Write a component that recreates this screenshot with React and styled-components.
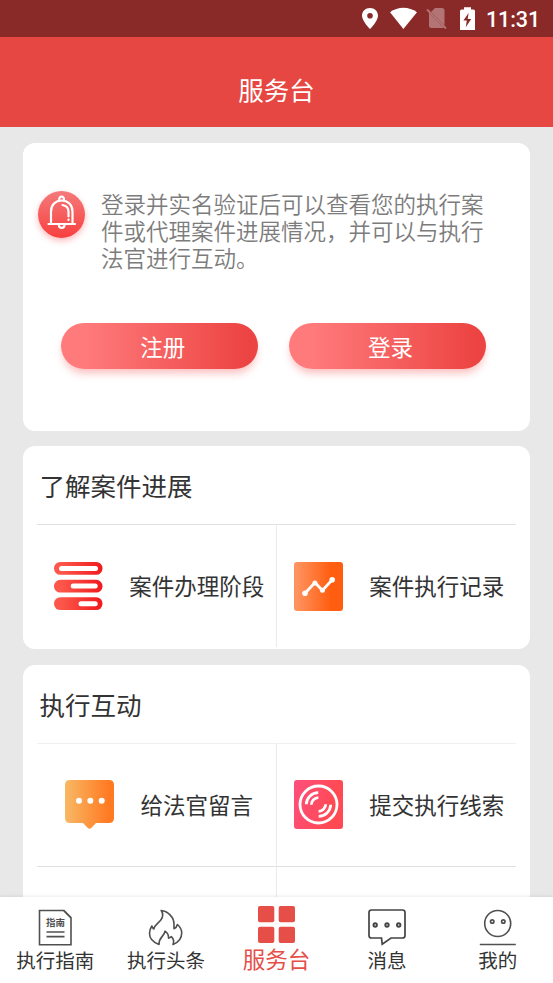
import React, { useState } from 'react';
import styled, { createGlobalStyle } from 'styled-components';

const GlobalStyle = createGlobalStyle`
  * {
    box-sizing: border-box;
  }
  body {
    margin: 0;
    font-family: "Noto Sans CJK SC", sans-serif;
    color: #333;
  }
  svg {
    display: block;
    flex: none;
  }
`;

const Screen = styled.div`
  display: flex;
  flex-direction: column;
  height: 983px;
  overflow: hidden;
  background-color: #e8e8e8;
`;

const StatusBar = styled.div`
  display: flex;
  flex: none;
  align-items: center;
  justify-content: flex-end;
  height: 37px;
  padding-right: 12px;
  background-color: #892a29;
`;

const Clock = styled.span`
  width: 55px;
  margin-left: 10px;
  padding-top: 1px;
  color: #fff;
  font-family: Roboto, sans-serif;
  font-size: 21.5px;
  font-weight: 500;
  line-height: 37px;
  letter-spacing: -0.1px;
`;

const Header = styled.header`
  flex: none;
  height: 90px;
  padding-top: 17px;
  background-color: #e64743;
  color: #fff;
  font-size: 25.5px;
  line-height: 70px;
  text-align: center;
`;

const Content = styled.main`
  display: flex;
  flex: 1;
  flex-direction: column;
  gap: 15.5px;
  min-height: 0;
  padding: 16px 23px 0;
  overflow: hidden;
`;

const Card = styled.section`
  flex: none;
  height: ${(props) => props.$height}px;
  padding: 0 14px;
  border-radius: 12px;
  background-color: #fff;
  overflow: hidden;
`;

const Notice = styled.div`
  display: flex;
  padding: 47px 0 0 1px;
`;

const NoticeText = styled.p`
  width: 384px;
  margin: 0 0 0 16px;
  color: #7c7c7c;
  font-size: 22.5px;
  font-weight: 350;
  line-height: 27px;
  white-space: nowrap;
`;

const BellBadge = styled.div`
  display: flex;
  flex: none;
  align-items: center;
  justify-content: center;
  width: 47px;
  height: 47px;
  margin-top: 1px;
  border-radius: 50%;
  background: linear-gradient(#f57a7b, #f8403f);
  box-shadow: 0 3px 6px rgba(248, 64, 64, 0.35);
`;

const Actions = styled.div`
  display: flex;
  gap: 30.6px;
  padding: 52px 0 0 24.3px;
`;

const Button = styled.button`
  width: 197px;
  height: 46px;
  padding: 0 0 0 6px;
  border: none;
  border-radius: 23px;
  background: linear-gradient(90deg, #ff7a7b 12%, #ec4442 95%);
  box-shadow: 0 6px 8px -2px rgba(244, 80, 80, 0.38);
  color: #fff;
  font-family: inherit;
  font-size: 22.5px;
  line-height: 46px;
  cursor: pointer;
`;

const SectionTitle = styled.h2`
  height: 78px;
  margin: 0;
  padding: 3px 0 0 2.5px;
  font-size: 25.5px;
  font-weight: 400;
  line-height: 71px;
`;

const Grid = styled.div`
  display: grid;
  grid-template-columns: 240px 239px;
`;

const Cell = styled.div`
  display: flex;
  align-items: center;
  justify-content: center;
  gap: 26.5px;
  height: 123px;
  padding-left: 5px;
  border-top: 1px solid ${(props) => (props.$light ? '#f0f0f0' : '#e0e0e0')};
  &:nth-child(odd) {
    border-right: 1px solid #ebebeb;
  }
`;

const CellLabel = styled.span`
  padding-bottom: 2px;
  font-size: 22.5px;
  line-height: 34px;
  white-space: nowrap;
`;

const TabBar = styled.nav`
  display: flex;
  flex: none;
  height: 86px;
  background-color: #fff;
  box-shadow: 0 -1px 3px rgba(0, 0, 0, 0.08);
  position: relative;
`;

const Tab = styled.button`
  display: flex;
  flex: 1;
  flex-direction: column;
  align-items: center;
  justify-content: flex-start;
  min-width: 0;
  padding: ${(props) => (props.$active ? 9 : 12)}px 0 0;
  border: none;
  background: none;
  color: ${(props) => (props.$active ? '#e64e48' : '#333')};
  font-family: inherit;
  font-size: ${(props) => (props.$active ? 22.5 : 19.5)}px;
  line-height: ${(props) => (props.$active ? 30 : 28)}px;
  white-space: nowrap;
  cursor: pointer;
`;

const StatusIcons = () => (
  <svg width="114" height="23" viewBox="362 7 114 23" fill="#fff">
    <path
      fillRule="evenodd"
      d="M370 8c-4.600 0-8 3.400-8 7.700 0 5.400 8 13.300 8 13.300s8-7.900 8-13.300c0-4.300-3.400-7.700-8-7.700zm0 4.900a2.800 2.800 0 1 1 0 5.600 2.800 2.800 0 0 1 0-5.600z"
    />
    <path d="M390 12.300C394 9.200 398.500 7.700 403.400 7.700S413 9.200 417 12.300L403.400 29z" />
    <g opacity="0.35">
      <path d="M435 8h7q2.500 0 2.500 2.500V25.500L431 12zM429 12.800L444 28H431.500q-2.500 0-2.500-2.500z" />
      <path d="M427 9.500L446 28.500" stroke="#fff" strokeWidth="1.800" />
    </g>
    <path
      fillRule="evenodd"
      d="M464 7.300h7v2.200h2.500q1.500 0 1.500 1.500v19h-15V11q0-1.500 1.500-1.500h2.500zM468.600 13l-5.200 7.500h3.400l-1 6.800 5.400-8.300h-3.500z"
    />
  </svg>
);

const BellIcon = () => (
  <svg width="47" height="47" viewBox="0 0 47 47" fill="none" stroke="#fff" strokeWidth="2.200" strokeLinecap="round">
    <path d="M10.500 33h26.500M13 32.500V20.500c0-6.500 4.500-11 10.700-11s10.800 4.500 10.800 11v12" />
    <path d="M21.300 8.800a2.400 2.400 0 1 1 4.600 0M20.900 34a2.800 2.800 0 0 0 5.600 0" />
    <path d="M24.500 14c3.500.5 6 3 6 7v4.500M30.500 28.500v.4" />
  </svg>
);

const StagesIcon = () => (
  <svg width="49" height="49" viewBox="0 0 49 49">
    <defs>
      <linearGradient id="stages" x1="0" x2="1">
        <stop offset="0.15" stopColor="#fc574a" />
        <stop offset="1" stopColor="#f01a1f" />
      </linearGradient>
    </defs>
    <g fill="url(#stages)">
      <rect x="0" y="0" width="48.500" height="12.800" rx="6.300" />
      <rect x="0" y="17.800" width="48.500" height="12.800" rx="6.300" />
      <rect x="0" y="35.200" width="48.500" height="12.800" rx="6.300" />
    </g>
    <g fill="#fff">
      <rect x="5" y="4" width="39" height="5" rx="2.500" />
      <rect x="16.700" y="21.600" width="27" height="5" rx="2.500" />
      <rect x="24.500" y="39.200" width="19.200" height="5" rx="2.500" />
    </g>
  </svg>
);

const RecordIcon = () => (
  <svg width="49" height="49" viewBox="0 0 49 49">
    <defs>
      <linearGradient id="record" x1="0" x2="1">
        <stop offset="0.05" stopColor="#ff935f" />
        <stop offset="0.75" stopColor="#ff5e10" />
      </linearGradient>
    </defs>
    <rect width="49" height="49" rx="3" fill="url(#record)" />
    <path d="M11 31.300L21 20.500l7.400 8L38 18" fill="none" stroke="#fff" strokeWidth="2.800" />
    <g fill="#fff">
      <circle cx="11" cy="31.300" r="2.800" />
      <circle cx="20.900" cy="21" r="2.500" />
      <circle cx="28.400" cy="28.200" r="2.500" />
      <circle cx="38.200" cy="17.800" r="2.800" />
    </g>
  </svg>
);

const MessageIcon = () => (
  <svg width="49" height="49" viewBox="0 0 49 49">
    <defs>
      <linearGradient id="message" x1="0" x2="1">
        <stop offset="0" stopColor="#f9b865" />
        <stop offset="0.9" stopColor="#ff7a22" />
      </linearGradient>
    </defs>
    <path d="M5 0h39q5 0 5 5v33q0 5-5 5H31l-4.500 4.700q-2 2-4 0L18 43H5q-5 0-5-5V5q0-5 5-5z" fill="url(#message)" />
    <g fill="#fff">
      <circle cx="14" cy="20.700" r="3" />
      <circle cx="25.300" cy="20.700" r="3" />
      <circle cx="36.700" cy="20.700" r="3" />
    </g>
  </svg>
);

const ClueIcon = () => (
  <svg width="49" height="49" viewBox="0 0 49 49" fill="none" stroke="#fff">
    <defs>
      <linearGradient id="clue" x1="0" x2="1" y1="0" y2="0.300">
        <stop offset="0" stopColor="#fd4f7d" />
        <stop offset="0.9" stopColor="#ff4a53" />
      </linearGradient>
    </defs>
    <rect width="49" height="49" rx="3" fill="url(#clue)" stroke="none" />
    <circle cx="24.500" cy="24.500" r="18.500" strokeWidth="2.800" />
    <path
      d="M12.300 24.200A12 12 0 0 1 24.300 12.700M17.300 24.800a7.300 7.300 0 0 1 7.100-7.100M36.700 24.800A12 12 0 0 1 24.700 36.300M31.700 24.200a7.300 7.300 0 0 1-7.100 7.100"
      strokeWidth="2.800"
    />
  </svg>
);

const GuideIcon = () => (
  <svg width="37" height="37" viewBox="0 0 37 37" fill="none" stroke="#505050" strokeWidth="1.600">
    <path d="M2.500 1.500H27l7 7v27.200H2.500zM26.500 1.500L34 9" />
    <path d="M9.500 23h18M9.500 27.600h18" />
    <text x="18.500" y="16.600" fontSize="9.500" fontWeight="700" textAnchor="middle" fill="#505050" stroke="none">
      指南
    </text>
  </svg>
);

const FlameIcon = () => (
  <svg width="37" height="37" viewBox="0 0 37 37" fill="none" stroke="#505050" strokeWidth="1.600" strokeLinejoin="round">
    <path d="M12 35.500C5.500 33 2.500 29 2.500 24.500c0-3 .8-5.200 2.300-7.500.4 1.400 1 2.300 2 3 1-4.300 4.500-5.500 7.200-9.200 2.400-3.300 2.300-6.200.2-9.300 6.300.5 13 6.500 12.800 14v4.300c1.800-.8 2.900-2.200 3.400-4.300 3 2.500 4.300 5.300 4.300 8.500 0 5.300-3.600 9.500-8.700 11.500 1.300-3.500.8-5.800-1.700-7.900-.8 1-1.800 1.500-2.800 1.500.2-3.300-1-5.500-3.500-7-.6 5.500-6.300 5.800-6 13.400z" />
  </svg>
);

const ServiceIcon = () => (
  <svg width="37" height="37" viewBox="0 0 37 37" fill="#e64e48">
    <rect width="16.300" height="16.300" rx="2" />
    <rect x="20.700" width="16.300" height="16.300" rx="2" />
    <rect y="20.700" width="16.300" height="16.300" rx="2" />
    <rect x="20.700" y="20.700" width="16.300" height="16.300" rx="2" />
  </svg>
);

const ChatIcon = () => (
  <svg width="38" height="37" viewBox="0 0 38 37" fill="none" stroke="#444" strokeWidth="1.700">
    <path d="M3.500 1h31q2.500 0 2.500 2.500v23q0 2.500-2.500 2.500H23l-8.800 6.200-.7-6.200h-10Q1 29 1 26.500v-23Q1 1 3.500 1z" />
    <circle cx="7.200" cy="16" r="1.700" strokeWidth="1.900" />
    <circle cx="19" cy="16" r="1.700" strokeWidth="1.900" />
    <circle cx="30.700" cy="16" r="1.700" strokeWidth="1.900" />
  </svg>
);

const MineIcon = () => (
  <svg width="37" height="37" viewBox="0 0 37 37" fill="none" stroke="#505050" strokeWidth="1.600">
    <circle cx="18.700" cy="14.500" r="13" />
    <circle cx="13.200" cy="12.500" r="1.700" strokeWidth="1.700" />
    <circle cx="24.300" cy="12.500" r="1.700" strokeWidth="1.700" />
    <path d="M0.800 35.500h36" />
  </svg>
);

const tabs = [
  { label: '执行指南', icon: GuideIcon },
  { label: '执行头条', icon: FlameIcon },
  { label: '服务台', icon: ServiceIcon },
  { label: '消息', icon: ChatIcon },
  { label: '我的', icon: MineIcon },
];

function App() {
  const [active, setActive] = useState('服务台');

  return (
    <>
      <GlobalStyle />
      <Screen>
        <StatusBar>
          <StatusIcons />
          <Clock>11:31</Clock>
        </StatusBar>
        <Header>服务台</Header>
        <Content>
          <Card $height={287.5}>
            <Notice>
              <BellBadge>
                <BellIcon />
              </BellBadge>
              <NoticeText>
                登录并实名验证后可以查看您的执行案
                <br />
                件或代理案件进展情况，并可以与执行
                <br />
                法官进行互动。
              </NoticeText>
            </Notice>
            <Actions>
              <Button>注册</Button>
              <Button>登录</Button>
            </Actions>
          </Card>

          <Card $height={203}>
            <SectionTitle>了解案件进展</SectionTitle>
            <Grid>
              <Cell>
                <StagesIcon />
                <CellLabel>案件办理阶段</CellLabel>
              </Cell>
              <Cell>
                <RecordIcon />
                <CellLabel>案件执行记录</CellLabel>
              </Cell>
            </Grid>
          </Card>

          <Card $height={330}>
            <SectionTitle>执行互动</SectionTitle>
            <Grid>
              <Cell $light>
                <MessageIcon />
                <CellLabel>给法官留言</CellLabel>
              </Cell>
              <Cell $light>
                <ClueIcon />
                <CellLabel>提交执行线索</CellLabel>
              </Cell>
              <Cell />
              <Cell />
            </Grid>
          </Card>
        </Content>
        <TabBar>
          {tabs.map(({ label, icon: Icon }) => (
            <Tab key={label} $active={label === active} onClick={() => setActive(label)}>
              <Icon />
              {label}
            </Tab>
          ))}
        </TabBar>
      </Screen>
    </>
  );
}

export default App;
